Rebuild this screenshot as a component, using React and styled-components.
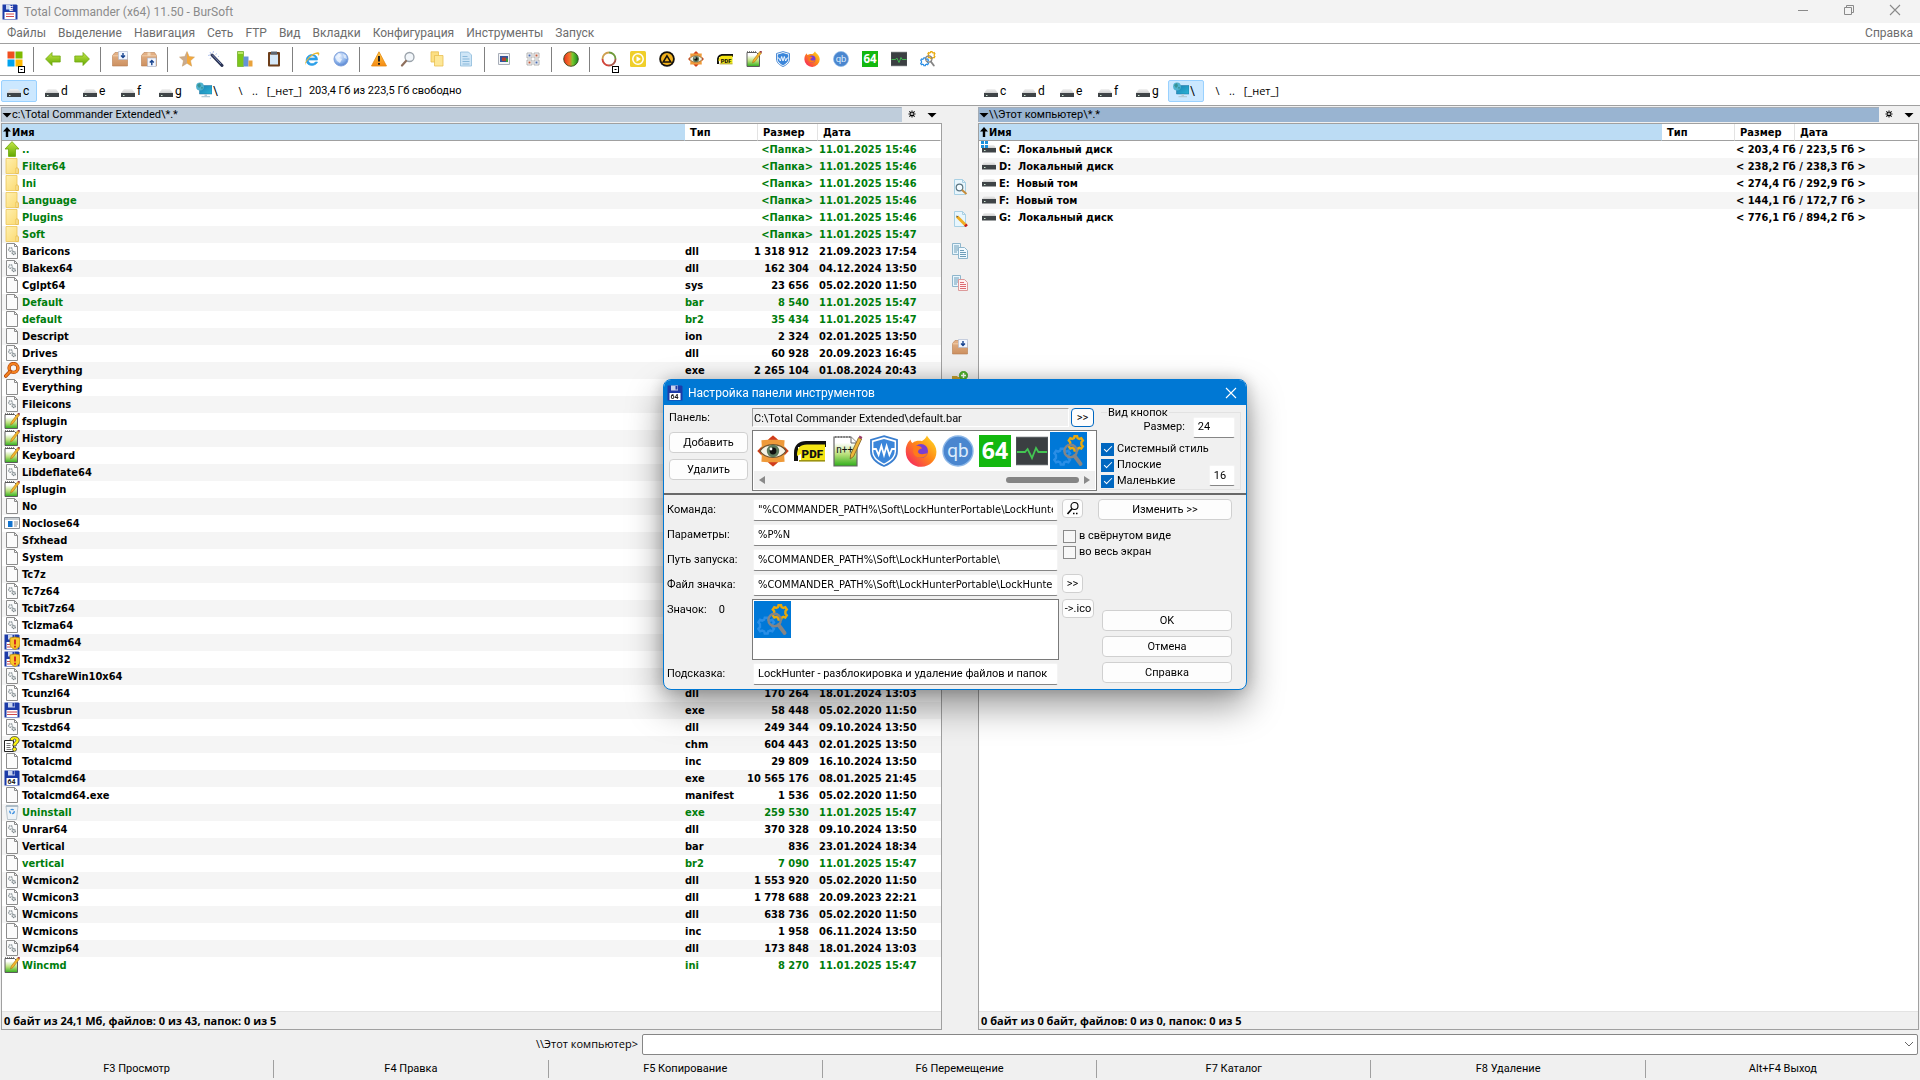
import React from "react";
import styled, { createGlobalStyle, css } from "styled-components";

const ui = `Roboto, "Noto Sans", sans-serif`;
const strong = `"DejaVu Sans Condensed", "DejaVu Sans", sans-serif`;
const wide = `"Open Sans", "Noto Sans", sans-serif`;

const GlobalStyle = createGlobalStyle`
  *, *::before, *::after { box-sizing: border-box; }
  body { margin: 0; overflow: hidden; background: #f0f0f0; }
  body, button, input { font-family: ${ui}; font-size: 11px; line-height: 16px; color: #000; }
  button { padding: 0; border: 0; background: none; white-space: nowrap; }
  h1, h2 { margin: 0; font-weight: 400; }
`;

/* ---------- icon drawings ---------- */

const Defs = () => (
  <DefsSvg aria-hidden="true">
    <defs>
      <linearGradient id="gArrow" x1="0" y1="0" x2="0" y2="1">
        <stop offset="0" stopColor="#c6e84a" />
        <stop offset="1" stopColor="#62a800" />
      </linearGradient>
      <linearGradient id="gFolder" x1="0" y1="0" x2="1" y2="1">
        <stop offset="0" stopColor="#fff0ae" />
        <stop offset="1" stopColor="#fbd970" />
      </linearGradient>
      <linearGradient id="gBox" x1="0" y1="0" x2="0" y2="1">
        <stop offset="0" stopColor="#e6b489" />
        <stop offset="1" stopColor="#cc9060" />
      </linearGradient>
      <linearGradient id="gNote" x1="0" y1="0" x2="0" y2="1">
        <stop offset="0.2" stopColor="#ffffff" />
        <stop offset="0.6" stopColor="#b9e07a" />
        <stop offset="1" stopColor="#2fae1c" />
      </linearGradient>
      <linearGradient id="gStar" x1="0" y1="0" x2="1" y2="0">
        <stop offset="0.5" stopColor="#c9ab90" />
        <stop offset="0.5" stopColor="#f5a93a" />
      </linearGradient>
      <linearGradient id="gBall" x1="0" y1="0" x2="1" y2="0">
        <stop offset="0" stopColor="#ee2b1c" />
        <stop offset="0.4" stopColor="#f0772c" />
        <stop offset="0.6" stopColor="#7ac72e" />
        <stop offset="1" stopColor="#0e8a1e" />
      </linearGradient>
      <linearGradient id="gWarn" x1="0" y1="0" x2="0" y2="1">
        <stop offset="0" stopColor="#ffc94a" />
        <stop offset="1" stopColor="#f58a12" />
      </linearGradient>
      <linearGradient id="gFox" x1="1" y1="0" x2="0" y2="1">
        <stop offset="0" stopColor="#ffe226" />
        <stop offset="0.45" stopColor="#ff8a16" />
        <stop offset="1" stopColor="#f5156c" />
      </linearGradient>
      <linearGradient id="gMon" x1="0" y1="0" x2="1" y2="1">
        <stop offset="0" stopColor="#1c7fb4" />
        <stop offset="1" stopColor="#2bb6d6" />
      </linearGradient>
      <linearGradient id="gDisk" x1="0" y1="0" x2="0" y2="1">
        <stop offset="0" stopColor="#f2f2f2" />
        <stop offset="1" stopColor="#cfcfcf" />
      </linearGradient>
      <radialGradient id="gGlobe" cx="0.4" cy="0.3" r="0.8">
        <stop offset="0" stopColor="#e8f1ff" />
        <stop offset="0.6" stopColor="#86aee8" />
        <stop offset="1" stopColor="#4373c6" />
      </radialGradient>
    </defs>
  </DefsSvg>
);

const gear = "M-1.2-6.600L1.200-6.600 1.700-4.900 3.400-4.100 5.100-4.800 6.500-2.700 5.200-1.200 5.200 1.200 6.500 2.700 5.100 4.800 3.400 4.100 1.700 4.900 1.200 6.600-1.200 6.600-1.700 4.900-3.400 4.100-5.100 4.800-6.500 2.700-5.200 1.200-5.200-1.200-6.500-2.700-5.100-4.800-3.400-4.100-1.700-4.900Z";

const Floppy = (
  <>
    <path d="M.5.5h14l1 1v14H.5z" fill="#1c3ba8" />
    <path d="M4 .5h7v5H4z" fill="#c9d4ee" />
    <path d="M8.500 1h2v3.500h-2z" fill="#1c3ba8" />
    <path d="M2.500 8h11v7h-11z" fill="#fff" />
  </>
);
const PageShape = <path d="M2.500.5h8l3 3v12h-11zM10.500.5v3h3" fill="#fbfbfb" stroke="#8c8c8c" />;
const BlueDoc = <path d="M2.500.5h8l3 3v12h-11zM10.500.5v3h3" fill="#e8f6fd" stroke="#a8d0e4" />;
const Box = (
  <>
    <path d="M.5 4.500L3 1.500h10.500l2 3V15H.5z" fill="url(#gBox)" stroke="#b57e50" strokeWidth=".6" />
    <path d="M.5 4.800h15" stroke="#f0cda8" />
    <path d="M6.500 1.500h3v3.300h-3z" fill="#f3d9bb" />
  </>
);
const Pdf = (
  <>
    <path d="M0 13V9c0-4 2.500-6 6-6h10v3H2v7z" fill="#111" />
    <path d="M1.500 10.500C1.500 6.500 3 4.800 6.500 4.800H15.500v8H3.500V9.500z" fill="#f4e514" />
    <path d="M2.500 12.500h13v.8h-13z" fill="#9d9410" />
    <text x="3.800" y="11.500" fontSize="5.800" fontWeight="900" fontFamily="Roboto, sans-serif" fill="#111">PDF</text>
  </>
);
const Notepad = (
  <>
    <path d="M1 1.500h9.500l3 3v11H1z" fill="url(#gNote)" stroke="#5c5c5c" />
    <path d="M1 .8h10" stroke="#555" strokeDasharray="1 1" />
    <path d="M6.500 12l.8-3L13.500.8 15.500 2 9 10.500z" fill="#f4b52b" stroke="#9c6a10" strokeWidth=".5" />
    <path d="M13.500.8L15.500 2l.5-1.500-1.300-.5z" fill="#8e1a2a" />
  </>
);
const NotepadLarge = (
  <>
    <path d="M1.500 1h8.500l3 3v11.500H1.500z" fill="url(#gNote)" stroke="#666" strokeWidth=".6" />
    <path d="M10 1v3h3" fill="#fff" stroke="#666" strokeWidth=".5" />
    <path d="M2 1h8" stroke="#777" strokeWidth=".9" strokeDasharray=".7 .7" />
    <text x="2.600" y="9" fontSize="5" fontFamily="Roboto, sans-serif" fill="#111">n++</text>
    <path d="M9.600 12l.2-2.300L13.800 1.300l1.500.7L11.300 10.700z" fill="#eeb63a" stroke="#7a5a20" strokeWidth=".4" />
    <path d="M13.800 1.300l1.500.7.4-1-1.400-.7z" fill="#9a3b6a" />
  </>
);
const LockHunter = (
  <>
    <path d={gear} transform="translate(11.400 4.200) scale(.54)" fill="none" stroke="#e9a90c" strokeWidth="2.200" />
    <path d={gear} transform="translate(4.600 10.800) scale(.6)" fill="none" stroke="#2a8ee6" strokeWidth="2" />
    <circle cx="8.800" cy="8" r="3.100" fill="none" stroke="#858585" strokeWidth="1.200" />
    <path d="M10.800 10.500l3 4" stroke="#858585" strokeWidth="1.900" strokeLinecap="round" />
  </>
);
const Dll = (
  <>
    {PageShape}
    <circle cx="6.500" cy="6.500" r="1.800" fill="none" stroke="#9aa2a6" strokeWidth="1.500" strokeDasharray="1.500 .5" />
    <circle cx="9.800" cy="10" r="1.500" fill="none" stroke="#7b8589" strokeWidth="1.400" strokeDasharray="1.300 .4" />
  </>
);

const drawings = {
  app: (<>{Floppy}<text x="7" y="6.500" fontSize="7" fontWeight="700" fill="#fff">E</text><path d="M4 10h8M4 12.500h8" stroke="#d0494d" /></>),
  floppy: (<>{Floppy}<path d="M3 10h10M3 12.500h10" stroke="#d0494d" /></>),
  floppy64: (<>{Floppy}<text x="3.500" y="14" fontSize="7" fontWeight="700" fontFamily="Roboto, sans-serif" fill="#222">64</text></>),
  windows: (<><path d="M.5.5h7v7h-7z" fill="#f04f1f" /><path d="M8.500.5h7v7h-7z" fill="#7eb900" /><path d="M.5 8.500h7v7h-7z" fill="#00a3ee" /><path d="M8.500 8.500h7v7h-7z" fill="#feb800" /></>),
  left: <path d="M.6 8L7 1.500V5h8.200v6H7v3.500z" fill="url(#gArrow)" stroke="#6fa80d" strokeWidth=".8" />,
  right: <path d="M15.400 8L9 1.500V5H.8v6H9v3.500z" fill="url(#gArrow)" stroke="#6fa80d" strokeWidth=".8" />,
  up: <path d="M8 .6L15 8h-3.500v7.400h-7V8H1z" fill="url(#gArrow)" stroke="#6fa80d" strokeWidth=".8" />,
  pack: (<>{Box}<path d="M6.500.5h9v8h-9z" fill="#f3f7ff" stroke="#a9b6cc" strokeWidth=".6" /><path d="M11 2v4.500M9 4.500l2 2 2-2" stroke="#16438f" strokeWidth="1.400" fill="none" /></>),
  unpack: (<>{Box}<path d="M6.500 7h8.500v8.500H6.500z" fill="#f3f7ff" stroke="#a9b6cc" strokeWidth=".6" /><path d="M10.800 14.200V9.500M8.800 11.500l2-2 2 2" stroke="#16438f" strokeWidth="1.400" fill="none" /></>),
  star: <path d="M8 .6l2.200 5 5.300.5-4 3.600 1.200 5.500L8 12.300l-4.700 2.900 1.200-5.500-4-3.600 5.300-.5z" fill="url(#gStar)" stroke="#c99a5c" strokeWidth=".5" />,
  wand: (<><path d="M4 4l10 10.500" stroke="#2a3354" strokeWidth="3" strokeLinecap="round" /><path d="M4 3.500l9 9.500" stroke="#8fa0d0" strokeWidth=".8" /><path d="M2 1l1 2M5.500 0L5 2M0 4.500l2-.5M9 2.500L7.500 3.500M2 8l1-1.500M11 5.500h-1" stroke="#b3c5ee" strokeWidth="1" /></>),
  bars: (<><path d="M.5.5h6v15h-6z" fill="#7cc61b" stroke="#5fa012" strokeWidth=".6" /><path d="M6.500 5.500h5v10h-5z" fill="#6593d8" /><path d="M11.500 9.500h4v6h-4z" fill="#e9a23b" /><path d="M1 1h5v2H1z" fill="#b9e865" /></>),
  clipboard: (<><rect x="2" y="1" width="12" height="14.500" rx="1" fill="#6d3e1a" /><path d="M4 3.500h8v10H4z" fill="#d5e8f8" /><path d="M5 .5h6v3H5z" fill="#5c6673" /></>),
  ie: (<><path d="M13.500 9H4.300c.3 4.300 5.700 4.500 7 2h2.200c-1.500 4.500-11 5-11.300-1.500C2 2 13.800 1.500 13.500 9zM4.500 7h6.800C11 4 5 4 4.500 7z" fill="#2b9fe8" stroke="#2b9fe8" strokeWidth=".7" /><path d="M1.500 14.500C-1 11 8 1.500 13.500 1.300c3 0 1.500 3 .8 3.900C15 2.800 12 2 8 5 4 8 .5 13 1.500 14.500z" fill="#edb72e" /></>),
  globe: (<><circle cx="8" cy="8" r="7" fill="url(#gGlobe)" stroke="#7d9fdb" /><path d="M2 6l4-4 2 2-2 3 3 1-2 4-3-2z" fill="#f0f6ff" opacity=".8" /><path d="M10 3l3 1 1 4-3-1z" fill="#f0f6ff" opacity=".7" /></>),
  warn: (<><path d="M8 .8L15.500 15H.5z" fill="url(#gWarn)" stroke="#e58a12" strokeWidth=".8" strokeLinejoin="round" /><path d="M8 5v5.500M8 12v1.800" stroke="#1c1c1c" strokeWidth="1.900" /></>),
  search: (<><circle cx="9.500" cy="6" r="4.500" fill="#f2f6fa" stroke="#9aa2aa" strokeWidth="1.300" /><path d="M6 10l-4 4.500" stroke="#8e6f5c" strokeWidth="2.200" strokeLinecap="round" /></>),
  copyY: (<><path d="M2 .8h7.500V11H2z" fill="#fcdf83" stroke="#e8bf52" strokeWidth=".8" /><path d="M5.500 4.500h8.500V15H5.500z" fill="#fde797" stroke="#e8bf52" strokeWidth=".8" /></>),
  docB: (<><path d="M2.500 1h8l3 3v11h-11z" fill="#cfe6f7" stroke="#8dbadb" strokeWidth=".8" /><path d="M4.500 5.500h5M4.500 8h7M4.500 10.500h7M4.500 13h7" stroke="#8ab9da" /></>),
  photo: (<><path d="M2.500 2.500h11v11h-11z" fill="#f3f5f8" stroke="#a8aeb8" /><path d="M4 5h8v6H4z" fill="#33549a" /><path d="M6 6.500h4V10H6z" fill="#b5432f" /><path d="M10 7.500h2V11h-2z" fill="#3c9a3a" /></>),
  thumbs: (<><path d="M2 2h5v5H2zM9 2h5v5H9zM2 9h5v5H2zM9 9h5v5H9z" fill="#f8f8f8" stroke="#a2a2a2" strokeWidth=".8" /><path d="M3.500 3.500h2v2h-2zM10.500 10.500h2v2h-2z" fill="#4a6cb0" /><path d="M10.500 3.500h2v2h-2zM3.500 10.500h2v2h-2z" fill="#c25a3a" /></>),
  ball: <circle cx="8" cy="8" r="7.300" fill="url(#gBall)" stroke="#3c4a1a" strokeWidth=".9" />,
  ring: (<><path d="M8 1.500a6.500 6.500 0 0 1 6.500 6.500" fill="none" stroke="#6f9a3a" strokeWidth="1.900" /><path d="M14.500 8A6.500 6.500 0 0 1 8 14.500" fill="none" stroke="#a85548" strokeWidth="1.900" /><path d="M8 14.500A6.500 6.500 0 0 1 1.500 8" fill="none" stroke="#d1453a" strokeWidth="1.900" /><path d="M1.500 8A6.500 6.500 0 0 1 8 1.500" fill="none" stroke="#cfa050" strokeWidth="1.900" /></>),
  player: (<><rect width="16" height="16" rx="1.500" fill="#f0cf2a" /><circle cx="8" cy="8" r="5.200" fill="none" stroke="#fff" strokeWidth="1.500" /><path d="M6.500 5.200L11 8l-4.500 2.800z" fill="#fff" /></>),
  aimp: (<><circle cx="8" cy="8" r="7.800" fill="#15120c" /><circle cx="8" cy="8" r="6" fill="#f3b21d" /><path d="M8 4.800l3.800 6.200H4.200z" fill="none" stroke="#15120c" strokeWidth="1.500" /></>),
  eye: (<><path d="M8 .2L10.500 2.400 13.800 2.600 13.600 5.600 15.800 8 13.600 10.400 13.800 13.400 10.500 13.600 8 15.800 5.500 13.600 2.200 13.400 2.400 10.400.2 8 2.400 5.600 2.200 2.600 5.500 2.400z" fill="#ef9a3a" /><path d="M8 .2l2.500 2.200h-5zM8 15.800l-2.500-2.200h5zM.2 8l2-2v4zM15.800 8l-2-2v4z" fill="#cf3b1f" /><path d="M1.500 8C4 3.800 12 3.800 14.500 8 12 12.200 4 12.200 1.500 8z" fill="#f4f2e6" stroke="#6c5330" strokeWidth=".6" /><circle cx="8" cy="8" r="3.100" fill="#5d7a5c" /><circle cx="8" cy="8" r="1.700" fill="#101010" /><circle cx="7" cy="7" r=".7" fill="#fff" /></>),
  pdf: Pdf,
  notepad: Notepad,
  notepadL: NotepadLarge,
  shield: (<><path d="M8 .6l6.500 1.900V8c0 4-3.500 6.300-6.500 7.500C5 14.300 1.500 12 1.500 8V2.500z" fill="#fff" stroke="#3a7fd0" strokeWidth=".9" /><path d="M8 2l5.300 1.500V8c0 3.200-2.700 5-5.300 6.200C5.400 13 2.700 11.200 2.700 8V3.500z" fill="#3b86da" /><path d="M2.500 7h1.500l1.300 3L6.700 5.500 8 10l1.300-4.500L10.700 10 12 7h1.500" fill="none" stroke="#fff" strokeWidth=".9" /></>),
  firefox: (<><path d="M11 .3c.4 1.800 4.700 3.700 4.700 8a7.600 7.400 0 0 1-15.300.3C.2 5.500 1.500 3.500 2.800 2.300c0 1 .5 1.500 1 1.700C5.500 2.500 7.500 3 8.500 3 9.500 2.500 10.500 1.500 11 .3z" fill="url(#gFox)" /><circle cx="8" cy="8" r="3.500" fill="#7a3fd0" /><path d="M4.300 5.800C6 5 8 5.500 8.500 6.800 7.500 6.800 6.500 7.500 6.500 8.500c.5 1.500 3 1.200 4.800.5-1 3.500-6.800 3-7.200-.5z" fill="#ff7a1a" /></>),
  qb: (<><circle cx="8" cy="8" r="7.500" fill="#4a86cf" stroke="#8db8e8" strokeWidth=".7" /><text x="8" y="11" fontSize="9.500" textAnchor="middle" fontFamily="Roboto, sans-serif" fill="#dcebfb">qb</text></>),
  x64: (<><path d="M0 0h16v16H0z" fill="#13b80f" /><text x="8" y="12" fontSize="11.500" fontWeight="700" textAnchor="middle" fontFamily="Noto Sans, sans-serif" fill="#fff">64</text></>),
  pulse: (<><path d="M0 1.200h16v13.600H0z" fill="#3b3f42" stroke="#575c60" strokeWidth=".6" /><path d="M.5 8.500h4l1.300-1.500L8 11.500l2-5 1.200 2h4.300" fill="none" stroke="#43c552" strokeWidth=".9" /></>),
  lock: LockHunter,
  disk: (<><path d="M4 6h8l3 4H1z" fill="url(#gDisk)" /><path d="M1 10h14v4H1z" fill="#3f4447" /><path d="M3 12.500h1.500" stroke="#cfe8d2" /></>),
  volume: (<><path d="M3 4h10l2 3H1z" fill="url(#gDisk)" /><path d="M1 7h14v4.500H1z" fill="#3f4447" /><path d="M3 9.500h1.500" stroke="#cfe8d2" /></>),
  volumeWin: (<><path d="M3 4h10l2 3H1z" fill="url(#gDisk)" /><path d="M1 7h14v4.500H1z" fill="#3f4447" /><path d="M3 9.500h1.500" stroke="#cfe8d2" /><path d="M0 0h3v3H0zM4 0h3v3H4zM0 4h3v3H0zM4 4h3v3H4z" fill="#1b90dc" /></>),
  net: (<><path d="M3.500 3.500H16V12H3.500z" fill="url(#gMon)" stroke="#1c6f9c" strokeWidth=".5" /><path d="M8.500 12h2.500v2h3v1.200H5.500V14h3z" fill="#b4cbd8" /><circle cx="4" cy="4.500" r="3.900" fill="#4fb2cf" /><path d="M1 3l3-2 1 3-2 2zM5 5h2L6 8z" fill="#2a7f6f" opacity=".6" /></>),
  folder: (<><path d="M2 .5h11v10l1.500.5v4.500H2z" fill="url(#gFolder)" stroke="#ecc659" strokeWidth=".8" /><path d="M12 15.500V10h2v5.500z" fill="#ffeeb0" stroke="#e3b544" strokeWidth=".7" /></>),
  page: PageShape,
  dll: Dll,
  every: (<><circle cx="9.500" cy="6" r="4.400" fill="none" stroke="#a8400a" strokeWidth="3.400" /><circle cx="9.500" cy="6" r="4.400" fill="none" stroke="#f58220" strokeWidth="2.200" /><path d="M5.800 9.800L1.800 14" stroke="#a8400a" strokeWidth="3.600" strokeLinecap="round" /><path d="M5.800 9.800L1.800 14" stroke="#f58220" strokeWidth="2.300" strokeLinecap="round" /></>),
  window: (<><path d="M.5 2.500h15v11H.5z" fill="#fff" stroke="#8a8f94" /><path d="M1 3h14v2H1z" fill="#c9ced2" /><path d="M4 6h4.500v6H4z" fill="#1173cf" /><path d="M10 7h4M10 9h4M10 11h3" stroke="#8a8f94" /></>),
  floppyWarn: (<>{Floppy}<path d="M3 10.500h4M3 13h4" stroke="#d0494d" /><path d="M6 4l5-1 5 1v6c0 3-2.500 4.500-5 5.500C8.500 14.500 6 13 6 10z" fill="#f8c62c" stroke="#b9850d" strokeWidth=".8" /><path d="M11 5.500v5M11 11.800v1.700" stroke="#d21c1c" strokeWidth="1.800" /></>),
  help: (<><path d="M.5 4.500h9v11h-9z" fill="#fff" stroke="#222" /><path d="M2.500 7.500h4M2.500 9.500h4M2.500 11.500h4M2.500 13.500h5" stroke="#777" /><path d="M6 4C6-.6 15.200-.6 15.200 4.200c0 3-3.200 3-3.200 5.800H8.800c0-4 3-3.800 3-5.800S9 3 8.700 5z" fill="#fdf30d" stroke="#333" strokeWidth=".8" /><circle cx="10.500" cy="13.300" r="2" fill="#fdf30d" stroke="#333" strokeWidth=".8" /></>),
  bin: (<><path d="M2 2h12l-1.500 13.500h-9z" fill="#eef3f7" stroke="#b9c4cc" /><path d="M2 2h12" stroke="#9fb0bc" strokeWidth="1.500" /><circle cx="8" cy="7.500" r="2.200" fill="none" stroke="#3a8ee0" strokeWidth="1.300" strokeDasharray="3 1" /></>),
  view: (<>{BlueDoc}<circle cx="7.500" cy="8.500" r="3.300" fill="#f4fbff" stroke="#5b7480" strokeWidth="1.200" /><path d="M10 11l4.500 4" stroke="#c58b3a" strokeWidth="2" /></>),
  edit: (<>{BlueDoc}<path d="M5 5.500l9 9" stroke="#f0ad22" strokeWidth="3" /><path d="M4 4.500l2 1-1 1z" fill="#333" /><path d="M13.200 13.600l1.600 1.600" stroke="#c8201c" strokeWidth="3" /></>),
  copy: (<><path d="M.5.5h8v11h-8z" fill="#e8f6fd" stroke="#8fb6cc" /><path d="M2 3h5M2 5h5M2 7h5M2 9h3" stroke="#6e9db8" /><path d="M6.500 4.500h6l3 3v8h-9z" fill="#f2faff" stroke="#8fb6cc" /><path d="M8 7.500h4M8 9.500h6M8 11.500h6M8 13.500h6" stroke="#6e9db8" /></>),
  move: (<><path d="M.5.5h8v11h-8z" fill="#e8f6fd" stroke="#8fb6cc" /><path d="M2 3h5M2 5h5M2 7h5M2 9h3" stroke="#6e9db8" /><path d="M6.500 4.500h6l3 3v8h-9z" fill="#fff1f1" stroke="#dc9a9a" /><path d="M8 7.500h4M8 9.500h6M8 11.500h6M8 13.500h6" stroke="#dd6b72" /></>),
  newDir: (<><path d="M0 5h5l1 1h7v10H0z" fill="#c7a12c" /><path d="M0 8h13v8H0z" fill="#a88a3a" /><circle cx="11.500" cy="4.500" r="4.200" fill="#53b52e" stroke="#3b8f1d" strokeWidth=".6" /><path d="M11.500 2v5M9 4.500h5" stroke="#fff" strokeWidth="1.500" /></>),
  find: (<><circle cx="9.500" cy="5" r="3.500" fill="none" stroke="#000" strokeWidth="1.100" /><path d="M6.800 8L2.500 13" stroke="#000" strokeWidth="1.600" /><path d="M8 12.500h1.500M11 12.500h1.500" stroke="#000" strokeWidth="1.300" /></>),
  min: <path d="M3 8.500h10" stroke="#8a8a8a" />,
  max: <path d="M3.500 5.500h7v7h-7zM5.500 5.500v-2h7v7h-2" fill="none" stroke="#8a8a8a" />,
  close: <path d="M3 3l10 10M13 3L3 13" stroke="currentColor" strokeWidth="1.100" />,
  down: <path d="M3.500 6h9L8 10.500z" fill="#000" />,
  sortUp: <path d="M8 3l4 4.500H9.200V13H6.800V7.500H4z" fill="#000" />,
  burst: (<><path d="M8 4v8M4 8h8M5 5l6 6M11 5l-6 6" stroke="#000" strokeWidth="1.200" /><circle cx="8" cy="8" r="1.100" fill="#fff" /></>),
  chevron: <path d="M4 6l4 4 4-4" fill="none" stroke="#666" />,
  sbLeft: <path d="M11 4v8L5 8z" fill="#8a8a8a" />,
  sbRight: <path d="M5 4v8l6-4z" fill="#8a8a8a" />,
};

const DefsSvg = styled.svg`
  position: absolute;
  width: 0;
  height: 0;
`;
const Svg = styled.svg`
  display: block;
  flex: none;
  width: ${(p) => p.$size}px;
  height: ${(p) => p.$size}px;
`;
const Icon = ({ name, size = 16 }) => (
  <Svg viewBox="0 0 16 16" $size={size} aria-hidden="true">{drawings[name]}</Svg>
);

/* ---------- window frame ---------- */

const Window = styled.div`
  display: flex;
  flex-direction: column;
  height: 100vh;
  background: #f0f0f0;
`;
const TitleBar = styled.header`
  display: flex;
  align-items: center;
  height: 23px;
  flex: none;
  padding: 0 2px;
  background: #f3f3f3;
`;
const Title = styled.h1`
  flex: 1;
  padding-left: 6px;
  font-size: 12px;
  color: #8b8b8b;
`;
const CaptionButton = styled.button`
  display: grid;
  place-items: center;
  width: 46px;
  height: 20px;
  align-self: flex-start;
  color: #8a8a8a;
`;
const MenuBar = styled.nav`
  display: flex;
  align-items: center;
  gap: 12px;
  height: 21px;
  flex: none;
  padding: 0 7px;
  background: #fff;
  border-bottom: 1px solid #a0a0a0;
`;
const MenuItem = styled.button`
  font-size: 12px;
  color: #6d6d6d;
  ${(p) => p.$end && css`margin-left: auto;`}
`;
const ToolBar = styled.div`
  display: flex;
  align-items: center;
  height: 32px;
  flex: none;
  padding-bottom: 1px;
  background: #fff;
  border-bottom: 1px solid #a0a0a0;
`;
const ToolButton = styled.button`
  position: relative;
  display: grid;
  place-items: center;
  width: 29px;
  height: 28px;
`;
const DropMark = styled.span`
  position: absolute;
  right: 4px;
  bottom: 0;
  width: 7px;
  height: 7px;
  border: 1px solid #000;
  background: #fff;
  &::after {
    content: "";
    display: block;
    margin: 2px 1px;
    border: 1px solid transparent;
    border-top-color: #000;
  }
`;
const ToolSeparator = styled.span`
  width: 1px;
  height: 25px;
  margin: 0 4px;
  background: #808080;
`;

/* ---------- drives ---------- */

const Split = styled.div`
  display: grid;
  grid-template-columns: minmax(0, 1fr) ${(p) => p.$gap}px minmax(0, 1fr);
  ${(p) => p.$fill && css`flex: 1; min-height: 0; padding: 1px 1px 0;`}
`;
const DriveArea = styled.div`
  flex: none;
  height: 30px;
  padding: 3px 1px 0;
  background: #fff;
  border-bottom: 1px solid #a0a0a0;
`;
const Drives = styled.div`
  display: flex;
  align-items: center;
  height: 23px;
  grid-column: ${(p) => p.$col};
`;
const DriveButton = styled.button`
  display: flex;
  align-items: center;
  gap: 1px;
  height: 22px;
  width: 36px;
  margin-right: 2px;
  padding: 0 0 0 4px;
  font-size: 12px;
  border: 1px solid ${(p) => (p.$on ? "#99d1ff" : "transparent")};
  border-radius: 2px;
  background: ${(p) => (p.$on ? "#cce8ff" : "transparent")};
  & > svg { margin-bottom: ${(p) => (p.$net ? 2 : 0)}px; }
`;
const NavButton = styled.button`
  min-width: 5px;
  margin-left: 9px;
  font-family: ${wide};
`;
const FreeSpace = styled.span`
  padding: 1px 0 0 7px;
`;

/* ---------- file panels ---------- */

const Panel = styled.section`
  display: flex;
  flex-direction: column;
  min-width: 0;
`;
const PathRow = styled.div`
  display: flex;
  height: 16px;
  padding-bottom: 1px;
`;
const Path = styled.button`
  display: flex;
  align-items: center;
  flex: 1;
  min-width: 0;
  text-align: left;
  background: ${(p) => (p.$active ? "#99b4d1" : "#bfcddb")};
  border: 1px solid #a3acb6;
  border-right-color: transparent;
  border-bottom-color: transparent;
  & > svg { margin: 0 -3px 0 -3px; }
`;
const PathTool = styled.button`
  display: grid;
  place-items: center;
  width: 20px;
  height: 13px;
`;
const ListBox = styled.div`
  display: flex;
  flex-direction: column;
  flex: 1;
  min-height: 0;
  background: #fff;
  border: 1px solid #a0a0a0;
`;
const Scroll = styled.div`
  flex: 1;
  min-height: 0;
  overflow: hidden;
`;
const Table = styled.table`
  width: 100%;
  table-layout: fixed;
  border-collapse: separate;
  border-spacing: 0;
  font-family: ${strong};
  font-weight: 700;
  line-height: 16px;
`;
const NameCol = styled.col``;
const TypeCol = styled.col`width: 73px;`;
const SizeCol = styled.col`width: 60px;`;
const DateCol = styled.col`width: 123px;`;
const Head = styled.th`
  height: 17px;
  padding: 0 0 0 ${(p) => (p.$sorted ? 0 : 5)}px;
  line-height: 16px;
  text-align: left;
  border-bottom: 1px solid #a0a0a0;
  border-right: 1px solid ${(p) => (p.$sorted || p.$last ? "transparent" : "#e3e3e3")};
  background: ${(p) => (p.$sorted ? "#bcdcf4" : "#fff")};
  background-clip: border-box;
`;
const HeadInner = styled.div`
  display: flex;
  height: 16px;
  line-height: 18px;
  & > svg { margin: 0 -3px; }
`;
const NameInner = styled.div`
  display: flex;
  height: 17px;
  line-height: 18px;
  & > svg { margin: 0 2px; }
`;
const Row = styled.tr`
  color: ${(p) => (p.$green ? "#007d0c" : "#000")};
  &:nth-child(even) { background: #f5f5f5; }
`;
const Cell = styled.td`
  height: 17px;
  padding: ${(p) => (p.$name ? 0 : 1)}px 0 0 ${(p) => (p.$inset ? 1 : 0)}px;
  white-space: pre;
`;
const SizeValue = styled.div`
  display: flex;
  justify-content: flex-end;
  padding-right: ${(p) => (p.$dir ? 5 : 9)}px;
`;
const Status = styled.div`
  height: 18px;
  padding-left: 2px;
  font-family: ${wide};
  font-weight: 700;
  line-height: 17px;
  background: #f0f0f0;
  border-top: 1px solid #e3e3e3;
`;
const SideBar = styled.div`
  display: flex;
  flex-direction: column;
  align-items: center;
  gap: 8px;
  padding-top: 68px;
`;
const SideButton = styled.button`
  display: grid;
  place-items: center;
  width: 24px;
  height: 24px;
  ${(p) => p.$spaced && css`margin-top: 32px;`}
`;

/* ---------- bottom ---------- */

const CommandLine = styled.div`
  display: grid;
  grid-template-columns: 1fr 2fr;
  align-items: center;
  gap: 4px;
  height: 27px;
  flex: none;
  padding: 1px 2px 0 0;
`;
const Prompt = styled.label`
  text-align: right;
  font-family: ${wide};
`;
const Combo = styled.div`
  display: flex;
  align-items: center;
  height: 21px;
  background: #fff;
  border: 1px solid #868686;
  border-radius: 2px;
`;
const ComboInput = styled.input`
  flex: 1;
  min-width: 0;
  border: 0;
  outline: 0;
  background: transparent;
`;
const FunctionKeys = styled.footer`
  display: grid;
  grid-template-columns: repeat(7, 1fr);
  height: 23px;
  flex: none;
  padding: 3px 0 2px;
`;
const FunctionKey = styled.button`
  height: 18px;
  border-right: 1px solid #a0a0a0;
  &:last-child { border-right: 0; }
`;

/* ---------- dialog ---------- */

const Dialog = styled.section`
  position: fixed;
  left: calc(50% - 297px);
  top: calc(50% - 161px);
  width: 584px;
  background: #f0f0f0;
  border: 1px solid #0078d4;
  border-radius: 8px;
  overflow: hidden;
  box-shadow: 0 16px 36px rgba(0, 0, 0, 0.4), 0 0 16px rgba(0, 0, 0, 0.2);
`;
const DialogTitle = styled.header`
  display: flex;
  align-items: center;
  height: 25px;
  padding-left: 3px;
  color: #fff;
  background: #0078d4;
`;
const DialogName = styled.h2`
  flex: 1;
  padding-left: 5px;
  font-size: 12px;
`;
const DialogClose = styled.button`
  display: grid;
  place-items: center;
  width: 31px;
  height: 24px;
  color: #fff;
`;
const Top = styled.div`
  display: grid;
  grid-template-columns: 79px 345px 1fr;
  column-gap: 4px;
  height: 90px;
  padding: 3px 5px 0;
  border-bottom: 2px solid #696969;
`;
const Stack = styled.div`
  display: flex;
  flex-direction: column;
  gap: ${(p) => p.$gap}px;
  ${(p) => p.$bottom && css`justify-content: flex-end; grid-row: 5 / 7; grid-column: 4; padding: 0 0 1px 6px;`}
`;
const Label = styled.label`
  height: 18px;
  line-height: 20px;
`;
const PushButton = styled.button`
  height: ${(p) => (p.$small ? 19 : 21)}px;
  width: ${(p) => (p.$width ? `${p.$width}px` : "100%")};
  display: grid;
  place-items: center;
  background: #fdfdfd;
  border: 1px solid ${(p) => (p.$focus ? "#0067c0" : "#d0d0d0")};
  border-radius: 4px;
`;
const BarRow = styled.div`
  display: flex;
  gap: 2px;
  padding-right: 3px;
`;
const BarPath = styled.input`
  flex: 1;
  min-width: 0;
  height: 19px;
  padding: 1px 1px 0;
  background: #f0f0f0;
  border: 1px solid #a0a0a0;
  border-right-color: #fff;
  border-bottom-color: #fff;
  outline: 0;
`;
const IconBox = styled.div`
  display: flex;
  flex-direction: column;
  height: 61px;
  padding: 1px;
  background: #fff;
  border: 1px solid #7a7a7a;
`;
const IconStrip = styled.div`
  display: flex;
`;
const IconTile = styled.button`
  display: grid;
  place-items: center;
  width: 37px;
  height: 37px;
  background: ${(p) => (p.$on ? "#0078d7" : "transparent")};
`;
const ScrollBar = styled.div`
  display: flex;
  align-items: center;
  flex: 1;
  margin-top: 2px;
  background: #f0f0f0;
`;
const ScrollTrack = styled.div`
  display: flex;
  justify-content: flex-end;
  flex: 1;
`;
const ScrollThumb = styled.span`
  width: 73px;
  height: 6px;
  border-radius: 3px;
  background: #858585;
`;
const Group = styled.fieldset`
  display: grid;
  grid-template-columns: 1fr auto;
  align-content: start;
  row-gap: 3px;
  margin: 0;
  padding: 0 6px 0 0;
  height: 82px;
  min-width: 0;
  border: 1px solid #e2e2e2;
  border-left: 0;
`;
const Legend = styled.legend`
  margin-left: 6px;
  padding: 0 1px;
  height: 8px;
  line-height: 10px;
`;
const SizeRow = styled.div`
  grid-column: 1 / 3;
  display: flex;
  justify-content: flex-end;
  align-items: center;
  gap: 8px;
  height: 22px;
`;
const Field = styled.input`
  width: ${(p) => (p.$width ? `${p.$width}px` : "100%")};
  height: ${(p) => (p.$width ? 21 : 22)}px;
  min-width: 0;
  padding: 0 4px 1px;
  background: #fff;
  border: 1px solid #f4f4f4;
  border-bottom-color: #868686;
  border-radius: 2px;
  outline: 0;
  ${(p) => p.$path && css`font-family: ${strong};`}
`;
const Check = styled.label`
  display: flex;
  align-items: center;
  gap: 3px;
  height: 16px;
  white-space: nowrap;
`;
const CheckBox = styled.input`
  appearance: none;
  flex: none;
  width: 13px;
  height: 13px;
  margin: 0;
  border: 1px solid #8a8a8a;
  background: #f7f7f7;
  display: grid;
  place-items: center;
  &:checked { background: #0067c0; border-color: #0067c0; }
  &:checked::after {
    content: "";
    width: 8px;
    height: 4px;
    margin-bottom: 3px;
    border: solid #fff;
    border-width: 0 0 1px 1px;
    transform: rotate(-45deg);
  }
`;
const SmallSize = styled.div`
  align-self: end;
  padding-bottom: 3px;
`;
const Form = styled.div`
  display: grid;
  grid-template-columns: 85px 307px 37px 136px;
  grid-template-rows: repeat(4, 22px) 61px 21px;
  row-gap: 3px;
  padding: 4px 4px 5px 3px;
`;
const FormLabel = styled.label`
  grid-column: 1;
  line-height: 21px;
`;
const FieldSlot = styled.div`
  grid-column: 2;
  padding: 0 1px;
`;
const Aux = styled.div`
  grid-column: 3;
  padding-left: 3px;
`;
const Wide = styled.div`
  grid-column: 4;
  padding-left: 2px;
`;
const Flags = styled.div`
  grid-column: 3 / 5;
  grid-row: 2 / 4;
  padding: 4px 0 0 4px;
`;
const Index = styled.output`
  padding-left: 12px;
`;

/* ---------- data ---------- */

const menu = ["Файлы", "Выделение", "Навигация", "Сеть", "FTP", "Вид", "Вкладки", "Конфигурация", "Инструменты", "Запуск"];
const tools = [
  ["windows", "drop"], null, ["left"], ["right"], null, ["pack"], ["unpack"], null,
  ["star"], ["wand"], ["bars"], ["clipboard"], null, ["ie"], ["globe"], null,
  ["warn"], ["search"], ["copyY"], ["docB"], null, ["photo"], ["thumbs"], null, ["ball"], null,
  ["ring", "drop"], ["player"], ["aimp"], ["eye"], ["pdf"], ["notepad"], ["shield"], ["firefox"], ["qb"], ["x64"], ["pulse"], ["lock"],
];
const G = true;
const D46 = "11.01.2025 15:46";
const D47 = "11.01.2025 15:47";
const files = [
  ["up", "..", "", "<Папка>", D46, G],
  ["folder", "Filter64", "", "<Папка>", D46, G],
  ["folder", "Ini", "", "<Папка>", D46, G],
  ["folder", "Language", "", "<Папка>", D46, G],
  ["folder", "Plugins", "", "<Папка>", D46, G],
  ["folder", "Soft", "", "<Папка>", D47, G],
  ["dll", "Baricons", "dll", "1 318 912", "21.09.2023 17:54"],
  ["dll", "Blakex64", "dll", "162 304", "04.12.2024 13:50"],
  ["page", "Cglpt64", "sys", "23 656", "05.02.2020 11:50"],
  ["page", "Default", "bar", "8 540", D47, G],
  ["page", "default", "br2", "35 434", D47, G],
  ["page", "Descript", "ion", "2 324", "02.01.2025 13:50"],
  ["dll", "Drives", "dll", "60 928", "20.09.2023 16:45"],
  ["every", "Everything", "exe", "2 265 104", "01.08.2024 20:43"],
  ["page", "Everything"],
  ["dll", "Fileicons"],
  ["notepad", "fsplugin"],
  ["notepad", "History"],
  ["notepad", "Keyboard"],
  ["dll", "Libdeflate64"],
  ["notepad", "lsplugin"],
  ["page", "No"],
  ["window", "Noclose64"],
  ["page", "Sfxhead"],
  ["page", "System"],
  ["page", "Tc7z"],
  ["dll", "Tc7z64"],
  ["dll", "Tcbit7z64"],
  ["dll", "Tclzma64"],
  ["floppyWarn", "Tcmadm64"],
  ["floppyWarn", "Tcmdx32"],
  ["dll", "TCshareWin10x64"],
  ["dll", "Tcunzl64", "dll", "170 264", "18.01.2024 13:03"],
  ["floppy", "Tcusbrun", "exe", "58 448", "05.02.2020 11:50"],
  ["dll", "Tczstd64", "dll", "249 344", "09.10.2024 13:50"],
  ["help", "Totalcmd", "chm", "604 443", "02.01.2025 13:50"],
  ["page", "Totalcmd", "inc", "29 809", "16.10.2024 13:50"],
  ["floppy64", "Totalcmd64", "exe", "10 565 176", "08.01.2025 21:45"],
  ["page", "Totalcmd64.exe", "manifest", "1 536", "05.02.2020 11:50"],
  ["bin", "Uninstall", "exe", "259 530", D47, G],
  ["dll", "Unrar64", "dll", "370 328", "09.10.2024 13:50"],
  ["page", "Vertical", "bar", "836", "23.01.2024 18:34"],
  ["page", "vertical", "br2", "7 090", D47, G],
  ["dll", "Wcmicon2", "dll", "1 553 920", "05.02.2020 11:50"],
  ["dll", "Wcmicon3", "dll", "1 778 688", "20.09.2023 22:21"],
  ["dll", "Wcmicons", "dll", "638 736", "05.02.2020 11:50"],
  ["page", "Wcmicons", "inc", "1 958", "06.11.2024 13:50"],
  ["dll", "Wcmzip64", "dll", "173 848", "18.01.2024 13:03"],
  ["notepad", "Wincmd", "ini", "8 270", D47, G],
];
const volumes = [
  ["volumeWin", "C:  Локальный диск", "< 203,4 Гб / 223,5 Гб >"],
  ["volume", "D:  Локальный диск", "< 238,2 Гб / 238,3 Гб >"],
  ["volume", "E:  Новый том", "< 274,4 Гб / 292,9 Гб >"],
  ["volume", "F:  Новый том", "< 144,1 Гб / 172,7 Гб >"],
  ["volume", "G:  Локальный диск", "< 776,1 Гб / 894,2 Гб >"],
];
const keys = ["F3 Просмотр", "F4 Правка", "F5 Копирование", "F6 Перемещение", "F7 Каталог", "F8 Удаление", "Alt+F4 Выход"];

/* ---------- parts ---------- */

const DriveBar = ({ col, active, free }) => (
  <Drives $col={col}>
    {["c", "d", "e", "f", "g"].map((d) => (
      <DriveButton key={d} $on={d === active}><Icon name="disk" />{d}</DriveButton>
    ))}
    <DriveButton $net $on={active === "net"}><Icon name="net" />{"\\"}</DriveButton>
    <NavButton>{"\\"}</NavButton>
    <NavButton>..</NavButton>
    <NavButton>[_нет_]</NavButton>
    {free && <FreeSpace>{free}</FreeSpace>}
  </Drives>
);

const FilePanel = ({ path, active, status, children }) => (
  <Panel>
    <PathRow>
      <Path $active={active}><Icon name="down" />{path}</Path>
      <PathTool aria-label="Избранное"><Icon name="burst" size={14} /></PathTool>
      <PathTool aria-label="История"><Icon name="down" /></PathTool>
    </PathRow>
    <ListBox>
      <Scroll>
        <Table>
          <colgroup><NameCol /><TypeCol /><SizeCol /><DateCol /></colgroup>
          <thead>
            <tr>
              <Head $sorted><HeadInner><Icon name="sortUp" />Имя</HeadInner></Head>
              <Head><HeadInner>Тип</HeadInner></Head>
              <Head><HeadInner>Размер</HeadInner></Head>
              <Head $last><HeadInner>Дата</HeadInner></Head>
            </tr>
          </thead>
          <tbody>{children}</tbody>
        </Table>
      </Scroll>
      <Status>{status}</Status>
    </ListBox>
  </Panel>
);

const ToolbarDialog = () => (
  <Dialog role="dialog" aria-labelledby="dlg-title">
    <DialogTitle>
      <Icon name="floppy64" />
      <DialogName id="dlg-title">Настройка панели инструментов</DialogName>
      <DialogClose aria-label="Закрыть"><Icon name="close" /></DialogClose>
    </DialogTitle>
    <Top>
      <Stack $gap={6}>
        <Label htmlFor="bar">Панель:</Label>
        <PushButton>Добавить</PushButton>
        <PushButton>Удалить</PushButton>
      </Stack>
      <Stack $gap={3}>
        <BarRow>
          <BarPath id="bar" readOnly value={"C:\\Total Commander Extended\\default.bar"} />
          <PushButton $small $focus $width={23}>&gt;&gt;</PushButton>
        </BarRow>
        <IconBox>
          <IconStrip>
            {["eye", "pdf", "notepadL", "shield", "firefox", "qb", "x64", "pulse", "lock"].map((n) => (
              <IconTile key={n} aria-label={n} $on={n === "lock"}><Icon name={n} size={32} /></IconTile>
            ))}
          </IconStrip>
          <ScrollBar>
            <Icon name="sbLeft" />
            <ScrollTrack><ScrollThumb /></ScrollTrack>
            <Icon name="sbRight" />
          </ScrollBar>
        </IconBox>
      </Stack>
      <Group>
        <Legend>Вид кнопок</Legend>
        <SizeRow>
          <label htmlFor="size">Размер:</label>
          <Field id="size" $width={42} defaultValue="24" />
        </SizeRow>
        <Stack $gap={0}>
          <Check><CheckBox type="checkbox" defaultChecked />Системный стиль</Check>
          <Check><CheckBox type="checkbox" defaultChecked />Плоские</Check>
          <Check><CheckBox type="checkbox" defaultChecked />Маленькие</Check>
        </Stack>
        <SmallSize><Field aria-label="Маленькие" $width={26} defaultValue="16" /></SmallSize>
      </Group>
    </Top>
    <Form>
      <FormLabel htmlFor="cmd">Команда:</FormLabel>
      <FieldSlot><Field $path id="cmd" defaultValue={'"%COMMANDER_PATH%\\Soft\\LockHunterPortable\\LockHunte'} /></FieldSlot>
      <Aux><PushButton $small $width={21} aria-label="Найти"><Icon name="find" /></PushButton></Aux>
      <Wide><PushButton>Изменить &gt;&gt;</PushButton></Wide>

      <FormLabel htmlFor="params">Параметры:</FormLabel>
      <FieldSlot><Field $path id="params" defaultValue="%P%N" /></FieldSlot>
      <Flags>
        <Check><CheckBox type="checkbox" />в свёрнутом виде</Check>
        <Check><CheckBox type="checkbox" />во весь экран</Check>
      </Flags>

      <FormLabel htmlFor="start">Путь запуска:</FormLabel>
      <FieldSlot><Field $path id="start" defaultValue={"%COMMANDER_PATH%\\Soft\\LockHunterPortable\\"} /></FieldSlot>

      <FormLabel htmlFor="iconfile">Файл значка:</FormLabel>
      <FieldSlot><Field $path id="iconfile" defaultValue={"%COMMANDER_PATH%\\Soft\\LockHunterPortable\\LockHunter"} /></FieldSlot>
      <Aux><PushButton $small $width={21}>&gt;&gt;</PushButton></Aux>

      <FormLabel as="div">Значок:<Index>0</Index></FormLabel>
      <IconBox>
        <IconStrip><IconTile $on aria-label="LockHunter"><Icon name="lock" size={32} /></IconTile></IconStrip>
      </IconBox>
      <Aux><PushButton $small $width={32}>-&gt;.ico</PushButton></Aux>
      <Stack $gap={5} $bottom>
        <PushButton>OK</PushButton>
        <PushButton>Отмена</PushButton>
        <PushButton>Справка</PushButton>
      </Stack>

      <FormLabel htmlFor="tip">Подсказка:</FormLabel>
      <FieldSlot><Field id="tip" defaultValue="LockHunter - разблокировка и удаление файлов и папок" /></FieldSlot>
    </Form>
  </Dialog>
);

export default function App() {
  return (
    <Window>
      <GlobalStyle />
      <Defs />
      <TitleBar>
        <Icon name="app" />
        <Title>Total Commander (x64) 11.50 - BurSoft</Title>
        <CaptionButton aria-label="Свернуть"><Icon name="min" /></CaptionButton>
        <CaptionButton aria-label="Восстановить"><Icon name="max" /></CaptionButton>
        <CaptionButton aria-label="Закрыть"><Icon name="close" /></CaptionButton>
      </TitleBar>
      <MenuBar>
        {menu.map((m) => <MenuItem key={m}>{m}</MenuItem>)}
        <MenuItem $end>Справка</MenuItem>
      </MenuBar>
      <ToolBar>
        {tools.map((t, i) => t
          ? <ToolButton key={i} aria-label={t[0]}><Icon name={t[0]} />{t[1] && <DropMark />}</ToolButton>
          : <ToolSeparator key={i} />)}
      </ToolBar>
      <DriveArea>
        <Split $gap={36}>
          <DriveBar col={1} active="c" free="203,4 Гб из 223,5 Гб свободно" />
          <DriveBar col={3} active="net" />
        </Split>
      </DriveArea>
      <Split $gap={36} $fill>
        <FilePanel path={"c:\\Total Commander Extended\\*.*"} status="0 байт из 24,1 Мб, файлов: 0 из 43, папок: 0 из 5">
          {files.map(([icon, name, type, size, date, green], i) => (
            <Row key={i} $green={green}>
              <Cell $name><NameInner><Icon name={icon} />{name}</NameInner></Cell>
              <Cell>{type}</Cell>
              <Cell><SizeValue $dir={size === "<Папка>"}>{size}</SizeValue></Cell>
              <Cell $inset>{date}</Cell>
            </Row>
          ))}
        </FilePanel>
        <SideBar>
          {["view", "edit", "copy", "move", "pack", "newDir"].map((n) => (
            <SideButton key={n} aria-label={n} $spaced={n === "pack"}><Icon name={n} /></SideButton>
          ))}
        </SideBar>
        <FilePanel active path={"\\\\Этот компьютер\\*.*"} status="0 байт из 0 байт, файлов: 0 из 0, папок: 0 из 5">
          {volumes.map(([icon, name, size]) => (
            <Row key={name}>
              <Cell $name><NameInner><Icon name={icon} />{name}</NameInner></Cell>
              <Cell />
              <Cell colSpan={2} $inset>{size}</Cell>
            </Row>
          ))}
        </FilePanel>
      </Split>
      <CommandLine>
        <Prompt htmlFor="cmdline">{"\\\\Этот компьютер>"}</Prompt>
        <Combo>
          <ComboInput id="cmdline" />
          <button aria-label="Открыть список"><Icon name="chevron" /></button>
        </Combo>
      </CommandLine>
      <FunctionKeys>
        {keys.map((k) => <FunctionKey key={k}>{k}</FunctionKey>)}
      </FunctionKeys>
      <ToolbarDialog />
    </Window>
  );
}
